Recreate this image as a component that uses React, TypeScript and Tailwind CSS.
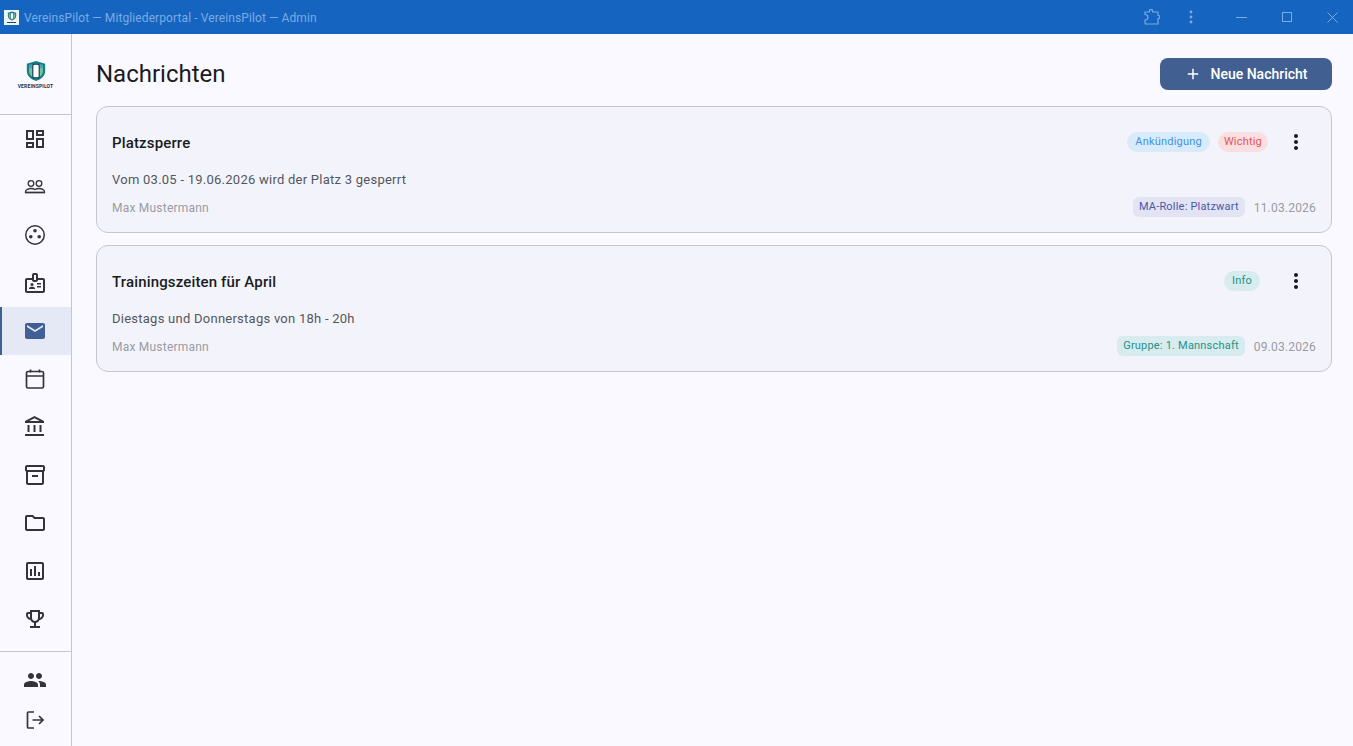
import React from "react";
import {
  MdOutlineDashboard, MdOutlineBadge, MdEmail, MdOutlineAccountBalance,
  MdOutlineInventory2, MdOutlineFolder, MdOutlineAssessment, MdOutlineEmojiEvents, MdPeople,
  MdMoreVert, MdAdd,
} from "react-icons/md";

const PeopleLine = () => (
  <svg width="24" height="24" viewBox="0 0 24 24" fill="none" stroke="currentColor" strokeWidth="1.3">
    <circle cx="8" cy="8.500" r="2.800" />
    <circle cx="16" cy="8.500" r="2.800" />
    <path d="M2.500 17.500v-.8c0-1.800 3-3.200 5.500-3.200 1.600 0 3 .4 4 1 1-.6 2.400-1 4-1 2.500 0 5.500 1.400 5.500 3.200v.8z" />
    <path d="M2 17.500h20" />
  </svg>
);
const Dots = () => (
  <svg width="24" height="24" viewBox="0 0 24 24" fill="currentColor">
    <path fillRule="evenodd" d="M12 2a10 10 0 1 0 0 20 10 10 0 0 0 0-20zm0 18.500a8.500 8.500 0 1 1 0-17 8.500 8.500 0 0 1 0 17z" />
    <circle cx="12" cy="7.800" r="1.800" />
    <circle cx="7.800" cy="13.800" r="1.800" />
    <circle cx="16.200" cy="13.800" r="1.800" />
  </svg>
);
const CalendarLine = () => (
  <svg width="24" height="24" viewBox="0 0 24 24" fill="none" stroke="currentColor" strokeWidth="1.700">
    <rect x="3.500" y="4.500" width="17" height="16.500" rx="1.500" />
    <path d="M3.500 9h17M7.500 2.500v3M16.500 2.500v3" />
  </svg>
);
const LogoutLine = () => (
  <svg width="24" height="24" viewBox="0 0 24 24" fill="none" stroke="currentColor" strokeWidth="1.700">
    <path d="M11 4H5.500a1 1 0 0 0-1 1v14a1 1 0 0 0 1 1H11" />
    <path d="M9.500 12H20M16 8l4 4-4 4" />
  </svg>
);

const top = [
  { I: MdOutlineDashboard },
  { I: PeopleLine },
  { I: Dots },
  { I: MdOutlineBadge },
  { I: MdEmail, active: true },
  { I: CalendarLine },
  { I: MdOutlineAccountBalance },
  { I: MdOutlineInventory2 },
  { I: MdOutlineFolder },
  { I: MdOutlineAssessment },
  { I: MdOutlineEmojiEvents },
];

const Shield = ({ size }: { size: number }) => (
  <svg width={size} height={size} viewBox="0 0 24 24">
    <path d="M12 1l10 3v8c0 5.500-4.500 9-10 11C6.500 21 2 17.500 2 12V4z" fill="#15808c" />
    <path d="M12 3.500l7.500 2.300V12c0 4-3.200 6.800-7.500 8.500C7.700 18.800 4.500 16 4.500 12V5.800z" fill="#7fc29a" />
    <path d="M12 3.500l7.500 2.300V9h-15V5.800z" fill="#4aa3b5" />
    <rect x="8.500" y="4.500" width="7" height="15" rx="1.500" fill="#ffffff" stroke="#0b3550" strokeWidth="1.200" />
  </svg>
);

type Chip = { label: string; cls: string };

function Card(props: { title: string; body: string; date: string; tags: Chip[]; target: Chip }) {
  return (
    <div className="rounded-xl border border-[#c5c6cf] bg-[#f3f4fb] p-[15px]">
      <div className="flex h-10 items-center justify-between">
        <div className="mt-[1px] text-[15px] font-medium leading-6 tracking-[0.15px] text-[#1a1b20]">{props.title}</div>
        <div className="flex items-center">
          <div className="flex gap-2">
            {props.tags.map((t) => (
              <span key={t.label} className={`flex h-5 items-center rounded-[10px] text-[11px] tracking-[0.2px] ${t.cls}`}>{t.label}</span>
            ))}
          </div>
          <div className="ml-2 flex h-10 w-10 items-center justify-center text-[#1a1b20]">
            <MdMoreVert size={24} />
          </div>
        </div>
      </div>
      <div className="mt-2 h-5 text-[13px] leading-5 tracking-[0.25px] text-[#54565e]">{props.body}</div>
      <div className="mt-[7px] flex h-5 items-center justify-between">
        <span className="pt-px text-xs tracking-[0.22px] text-[#9a9ba3]">Max Mustermann</span>
        <div className="flex items-center gap-[9px]">
          <span className={`flex h-5 items-center rounded-md px-1.5 text-[11px] tracking-[0.2px] ${props.target.cls}`}>{props.target.label}</span>
          <span className="pt-px text-xs tracking-[0.2px] text-[#9a9ba3]">{props.date}</span>
        </div>
      </div>
    </div>
  );
}

export default function App() {
  return (
    <div className="flex h-[746px] w-[1353px] flex-col overflow-hidden bg-[#faf9ff] font-['Roboto',sans-serif]">
      <div className="flex h-[34px] shrink-0 items-center bg-[#1565c0] text-[#7aabe3]">
        <div className="ml-[4px] flex h-[15px] w-[15px] flex-col items-center justify-center bg-[#eef3f6]">
          <Shield size={10} />
          <div className="mt-px h-px w-[9px] bg-[#1f4a5a]" />
        </div>
        <span className="ml-[5px] pt-px text-xs tracking-[0.1px]">VereinsPilot — Mitgliederportal - VereinsPilot — Admin</span>
        <div className="ml-auto flex items-center">
          <svg width="16" height="16" viewBox="0 0 16 16" fill="none" stroke="currentColor" strokeWidth="1.200" className="mr-[29px]">
            <path d="M1 3h4.500V1.800a1.500 1.500 0 0 1 3 0V3H14v3.500h.3a1.500 1.500 0 0 1 0 3H14V15H1.500a1 1 0 0 1-.5-.6V11h.6a2.800 2.800 0 0 0 0-5.500H1z" strokeLinejoin="round" />
          </svg>
          <svg width="4" height="14" viewBox="0 0 4 14" fill="currentColor" className="mr-[43px]">
            <circle cx="2" cy="2" r="1.400" /><circle cx="2" cy="7" r="1.400" /><circle cx="2" cy="12" r="1.400" />
          </svg>
          <div className="mr-[35px] h-px w-[11px] bg-current" />
          <div className="mr-[35px] h-[10px] w-[10px] border border-current" />
          <svg width="11" height="11" viewBox="0 0 11 11" stroke="currentColor" className="mr-[15px]">
            <path d="M.5.500l10 10M10.500.500l-10 10" />
          </svg>
        </div>
      </div>
      <div className="flex min-h-0 flex-1">
        <aside className="flex w-[72px] shrink-0 flex-col border-r border-[#c5c6cf] text-[#33343a]">
          <div className="flex h-[81px] shrink-0 flex-col items-center justify-center border-b border-[#c5c6cf]">
            <Shield size={22} />
            <span className="mt-[1px] text-[5px] font-bold leading-[6px] tracking-[0.15px] text-[#12344f]">VEREINSPILOT</span>
          </div>
          <div className="flex-1">
            {top.map(({ I, active }, i) => (
              <div
                key={i}
                className={`flex h-12 items-center justify-center border-l-2 border-r-[3px] border-r-transparent ${active ? "border-l-[#3f5f95] bg-[#e4e9f5] text-[#3f5f95]" : "border-l-transparent"}`}
              >
                <I size={24} />
              </div>
            ))}
          </div>
          <div className="border-t border-[#c5c6cf] pb-[6px] pr-px pt-2">
            <div className="flex h-10 items-center justify-center"><MdPeople size={24} /></div>
            <div className="flex h-10 items-center justify-center"><LogoutLine /></div>
          </div>
        </aside>
        <main className="flex-1 pl-6 pr-[21px] pt-6">
          <div className="flex h-8 items-center justify-between">
            <h1 className="text-2xl leading-8 text-[#1a1b20]">Nachrichten</h1>
            <button className="flex h-8 w-[172px] items-center justify-center gap-2 rounded-lg bg-[#415f91] text-sm font-medium text-white">
              <MdAdd size={18} />
              Neue Nachricht
            </button>
          </div>
          <div className="mt-4 flex flex-col gap-3">
            <Card
              title="Platzsperre"
              body="Vom 03.05 - 19.06.2026 wird der Platz 3 gesperrt"
              date="11.03.2026"
              tags={[
                { label: "Ankündigung", cls: "px-2 bg-[#d9eafb] text-[#3d94e0]" },
                { label: "Wichtig", cls: "px-1.5 bg-[#f9dfe2] text-[#e25555]" },
              ]}
              target={{ label: "MA-Rolle: Platzwart", cls: "bg-[#e2e4f3] text-[#4a57ad]" }}
            />
            <Card
              title="Trainingszeiten für April"
              body="Diestags und Donnerstags von 18h - 20h"
              date="09.03.2026"
              tags={[{ label: "Info", cls: "px-2 mr-2 bg-[#d8ebee] text-[#1b9488]" }]}
              target={{ label: "Gruppe: 1. Mannschaft", cls: "bg-[#d8ebee] text-[#1b9488]" }}
            />
          </div>
        </main>
      </div>
    </div>
  );
}
